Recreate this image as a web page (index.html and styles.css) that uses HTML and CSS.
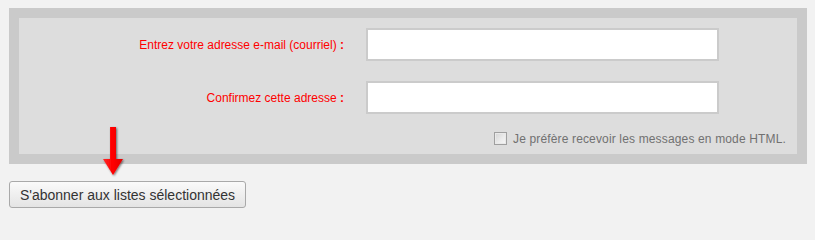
FILE: index.html
```html
<!DOCTYPE html>
<html lang="fr">
<head>
<meta charset="utf-8">
<title>Abonnement</title>
<link rel="stylesheet" href="styles.css">
</head>
<body>
<div class="page">
  <form class="box">
    <div class="inner">
      <div class="grid">
        <label class="lbl" for="email">Entrez votre adresse e-mail (courriel)<b> :</b></label>
        <input class="field" id="email" type="text">
        <label class="lbl" for="email2">Confirmez cette adresse<b> :</b></label>
        <input class="field" id="email2" type="text">
      </div>
      <div class="opt">
        <span class="cb"></span>
        <span class="opt-text">Je préfère recevoir les messages en mode HTML.</span>
      </div>
    </div>
  </form>
  <div class="actions">
    <button class="btn" type="button">S'abonner aux listes sélectionnées</button>
  </div>
  <svg class="arrow" width="32" height="54" viewBox="0 0 32 54">
    <defs>
      <filter id="sh" x="-50%" y="-50%" width="200%" height="200%">
        <feGaussianBlur in="SourceAlpha" stdDeviation="1.2"/>
        <feOffset dx="1" dy="1" result="b"/>
        <feComponentTransfer><feFuncA type="linear" slope="0.55"/></feComponentTransfer>
        <feMerge><feMergeNode/><feMergeNode in="SourceGraphic"/></feMerge>
      </filter>
      <linearGradient id="g" x1="0" y1="0" x2="1" y2="0">
        <stop offset="0" stop-color="#ff2a2a"/>
        <stop offset="0.5" stop-color="#ff0000"/>
        <stop offset="1" stop-color="#e00000"/>
      </linearGradient>
    </defs>
    <path d="M12 1 L18 1 L18 33 L25 33 L15 49 L5 33 L12 33 Z" fill="url(#g)" filter="url(#sh)"/>
  </svg>
</div>
</body>
</html>
```
FILE: styles.css
```css
html, body {
  margin: 0;
  padding: 0;
  background: #f2f2f2;
}
body {
  font-family: Arial, "Liberation Sans", sans-serif;
}
.page {
  position: relative;
  padding: 8px 8px 0 9px;
}
.box {
  margin: 0;
  width: 778px;
  border: 10px solid #cacaca;
  background: #dddddd;
}
.inner {
  padding: 10px 11px 9px 0;
}
.grid {
  display: grid;
  grid-template-columns: 325px 353px;
  column-gap: 22px;
  row-gap: 20px;
  align-items: center;
}
.lbl {
  text-align: right;
  color: #ff0000;
  font-size: 12px;
  line-height: 14px;
}
.lbl b {
  font-weight: bold;
}
.field {
  box-sizing: border-box;
  width: 353px;
  height: 33px;
  margin: 0;
  border: 2px solid #cbcbcb;
  background: #ffffff;
  padding: 0 4px;
  font: 13px Arial, "Liberation Sans", sans-serif;
  outline: none;
}
.opt {
  display: flex;
  justify-content: flex-end;
  align-items: center;
  gap: 6px;
  margin-top: 18px;
  height: 13px;
}
.cb {
  box-sizing: border-box;
  width: 13px;
  height: 13px;
  border: 1px solid #9f9f9f;
  background: linear-gradient(135deg, #d4d4d4 0%, #ececec 60%, #f7f7f7 100%);
  box-shadow: inset 0 0 0 1px #e9e9e9;
}
.opt-text {
  color: #717171;
  font-size: 12px;
  line-height: 14px;
  letter-spacing: 0.15px;
}
.actions {
  margin-top: 17px;
}
.btn {
  box-sizing: border-box;
  height: 27px;
  width: 237px;
  margin: 0;
  padding: 0 8px;
  border: 1px solid #a9a9a9;
  border-radius: 3px;
  background: linear-gradient(#fafafa, #e4e4e4);
  color: #333333;
  font: 14px Arial, "Liberation Sans", sans-serif;
  white-space: nowrap;
}
.arrow {
  position: absolute;
  left: 98px;
  top: 126px;
}
```
